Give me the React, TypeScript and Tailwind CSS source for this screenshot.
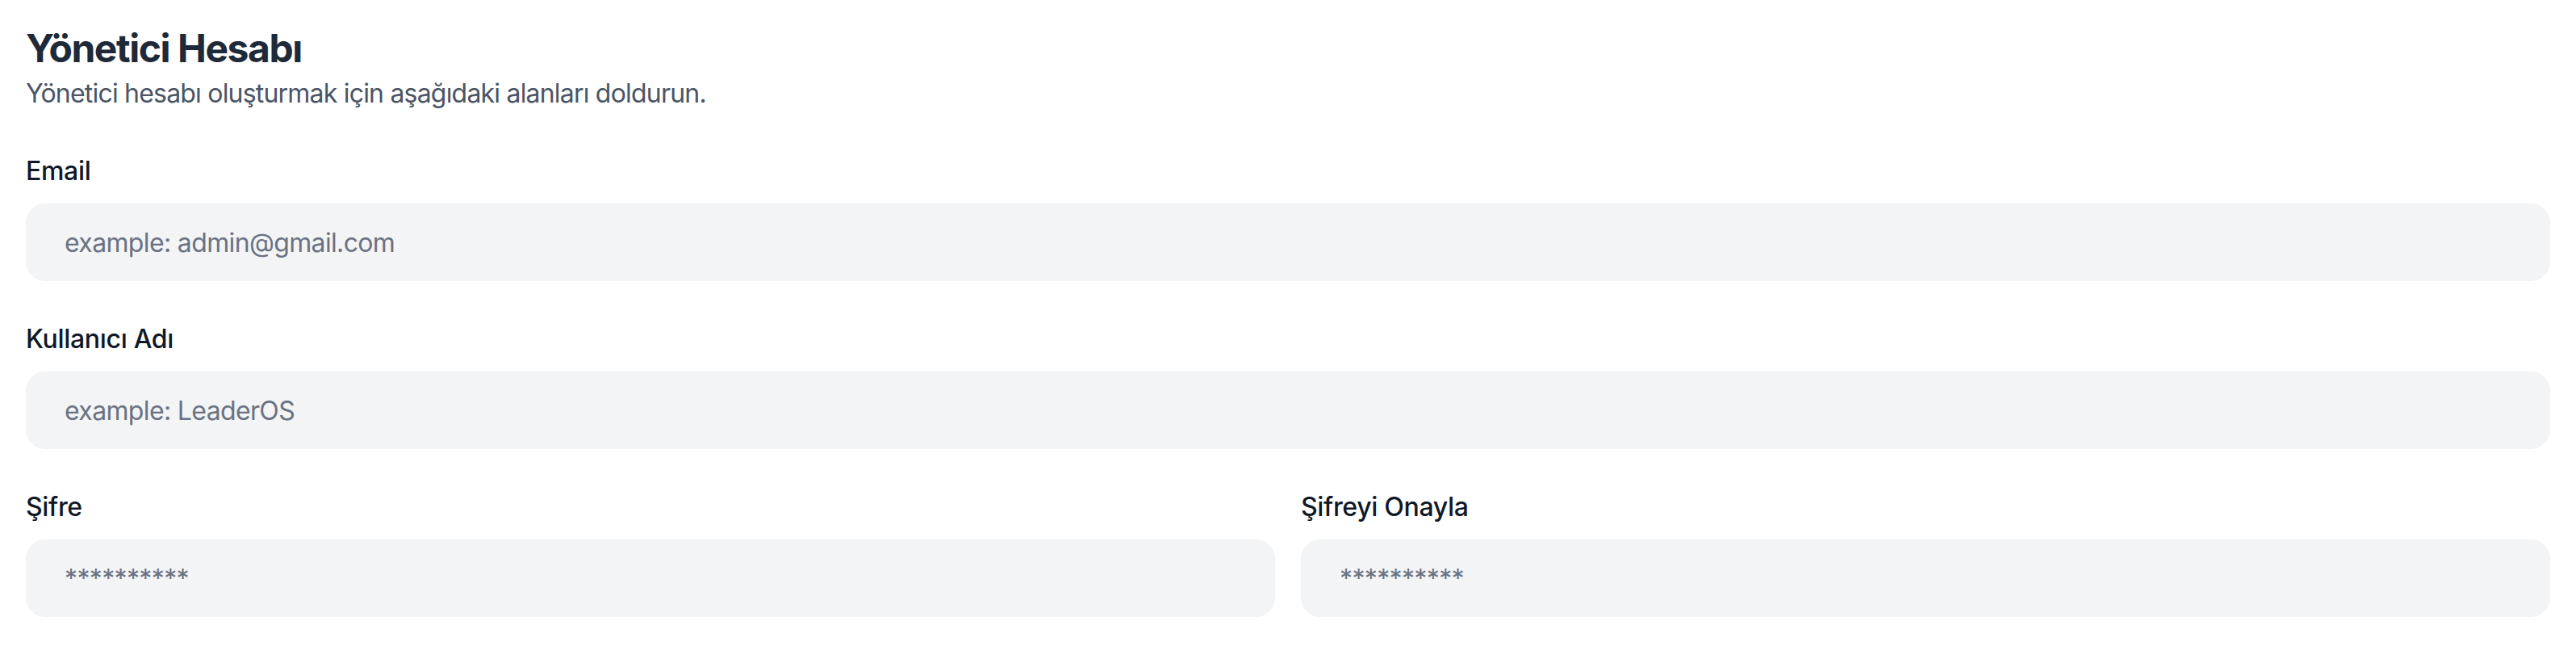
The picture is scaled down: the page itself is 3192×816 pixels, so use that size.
import React from 'react';

interface FieldProps {
  label: string;
  placeholder: string;
  type?: string;
}

function Field({ label, placeholder, type = 'text' }: FieldProps) {
  return (
    <div className="flex flex-col">
      <label className="mb-4 block text-[32px] font-medium leading-[48px] text-gray-900">
        {label}
      </label>
      <input
        type={type}
        placeholder={placeholder}
        className="h-[96px] w-full rounded-[24px] bg-gray-100 px-[48px] text-[32px] tracking-[-0.02em] text-gray-900 outline-none placeholder:text-gray-500"
      />
    </div>
  );
}

export default function App() {
  return (
    <div className="min-h-screen bg-white px-8 pt-[28px] font-['Inter',sans-serif] tracking-[-0.02em]">
      {/* Header */}
      <h1 className="text-[48px] font-bold leading-[64px] tracking-[-0.03em] text-gray-800">
        Yönetici Hesabı
      </h1>
      <p className="text-[32px] leading-[48px] tracking-[-0.025em] text-gray-600">
        Yönetici hesabı oluşturmak için aşağıdaki alanları doldurun.
      </p>

      {/* Form */}
      <div className="mt-[48px] flex flex-col gap-12">
        <Field label="Email" placeholder="example: admin@gmail.com" />
        <Field label="Kullanıcı Adı" placeholder="example: LeaderOS" />
        <div className="grid grid-cols-2 gap-8">
          <Field label="Şifre" placeholder="**********" type="password" />
          <Field label="Şifreyi Onayla" placeholder="**********" type="password" />
        </div>
      </div>
    </div>
  );
}
